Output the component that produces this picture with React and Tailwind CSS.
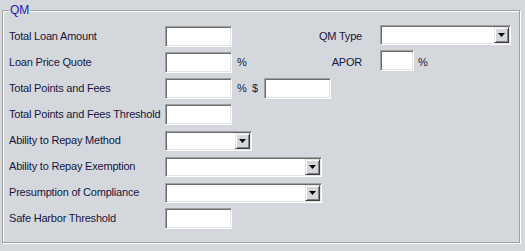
import { useState } from "react";

/** sunken white field, classic windows look */
function TextBox({ width }) {
  return (
    <div
      className="h-[21px] shrink-0 border border-t-[#a0a0a0] border-l-[#a0a0a0] border-b-white border-r-white bg-white shadow-[inset_1px_1px_0_#6d6d6d,inset_-1px_-1px_0_#e3e3e3]"
      style={{ width }}
    />
  );
}

/** combo box with drop arrow */
function ComboBox({ width, className = "" }) {
  return (
    <div
      className={`flex h-[20px] shrink-0 justify-end border border-t-[#a0a0a0] border-l-[#a0a0a0] border-b-white border-r-white bg-white p-[1px] shadow-[inset_1px_1px_0_#6d6d6d,inset_-1px_-1px_0_#e3e3e3] ${className}`}
      style={{ width }}
    >
      <div className="flex h-full w-[15px] items-center justify-center border border-t-[#e3e3e3] border-l-[#e3e3e3] border-b-[#404040] border-r-[#404040] bg-[#d4d8dc] shadow-[inset_1px_1px_0_#fff,inset_-1px_-1px_0_#808080]">
        <svg width="7" height="4" viewBox="0 0 7 4">
          <path d="M0 0h7L3.5 4z" fill="#000" />
        </svg>
      </div>
    </div>
  );
}

function Label({ children }) {
  return <div className="w-[156px] shrink-0 whitespace-nowrap">{children}</div>;
}

export default function App() {
  const [rows] = useState([
    "Ability to Repay Method",
    "Ability to Repay Exemption",
    "Presumption of Compliance",
  ]);

  return (
    <div className="h-[251px] w-[525px] overflow-hidden bg-[#d4d8dc] pt-[10px] pl-[2px] font-['Liberation_Sans',Arial,sans-serif] text-[11px] tracking-[-0.2px] text-[#161640]">
      {/* QM group */}
      <div className="relative h-[233px] w-[518px] border border-[#a0a0a0] shadow-[inset_1px_1px_0_#fff,1px_1px_0_#fff]">
        <span className="absolute -top-[8px] left-[6px] bg-[#d4d8dc] px-[1px] text-[12px] leading-[14px] tracking-normal text-[#1a1ab4]">
          QM
        </span>

        <div className="flex flex-col gap-[5px] pt-[15px] pl-[6px]">
          {/* row 1 */}
          <div className="flex h-[21px] items-center">
            <Label>Total Loan Amount</Label>
            <TextBox width={67} />
            <div className="w-[130px] shrink-0 text-right">QM Type</div>
            <ComboBox width={131} className="ml-[18px] -mt-[1px] self-start" />
          </div>

          {/* row 2 */}
          <div className="flex h-[21px] items-center">
            <Label>Loan Price Quote</Label>
            <TextBox width={67} />
            <span className="w-[18px] shrink-0 pl-[5px]">%</span>
            <div className="w-[112px] shrink-0 text-right">APOR</div>
            <div className="ml-[18px] -mt-[2px] self-start">
              <TextBox width={34} />
            </div>
            <span className="pl-[4px]">%</span>
          </div>

          {/* row 3 */}
          <div className="flex h-[21px] items-center">
            <Label>Total Points and Fees</Label>
            <TextBox width={67} />
            <span className="w-[20px] shrink-0 pl-[5px]">%</span>
            <span className="w-[12px] shrink-0">$</span>
            <TextBox width={67} />
          </div>

          <div className="flex h-[21px] items-center">
            <Label>Total Points and Fees Threshold</Label>
            <TextBox width={67} />
          </div>

          {rows.map((label, i) => (
            <div key={label} className="flex h-[21px] items-center">
              <Label>{label}</Label>
              <ComboBox width={i === 0 ? 87 : 157} />
            </div>
          ))}

          <div className="flex h-[21px] items-center">
            <Label>Safe Harbor Threshold</Label>
            <TextBox width={67} />
          </div>
        </div>
      </div>
    </div>
  );
}
